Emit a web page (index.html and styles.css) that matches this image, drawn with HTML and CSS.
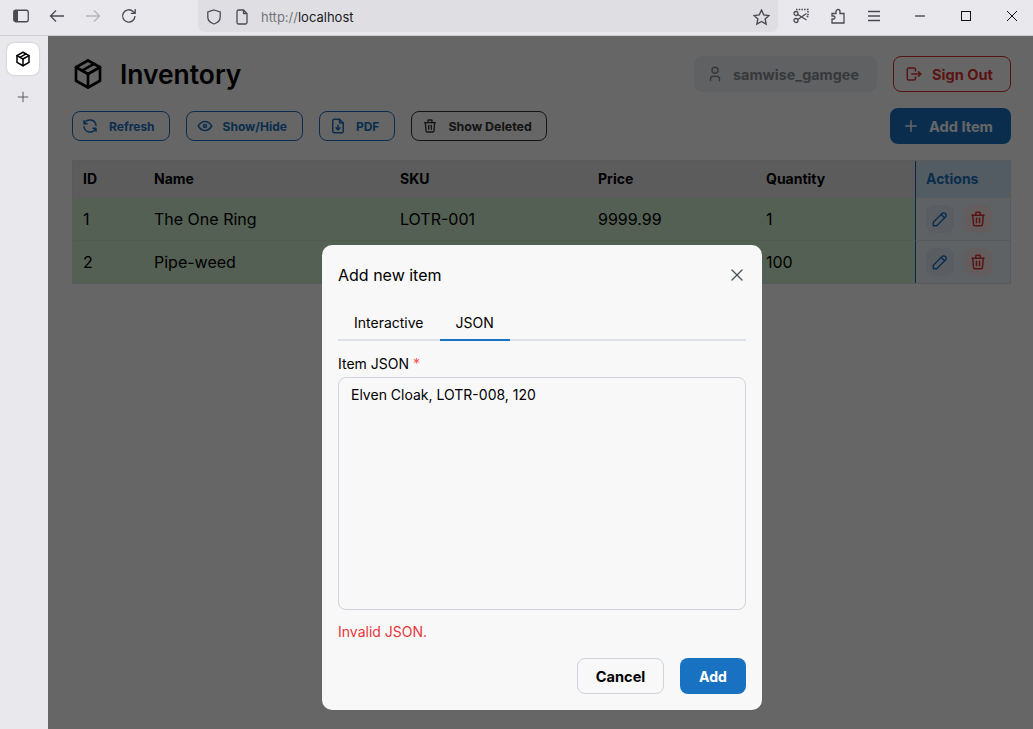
FILE: index.html
```html
<!DOCTYPE html>
<html>
	<head>
		<title>Inventory</title>
		<link rel="stylesheet" href="styles.css">
	</head>
	<body>
		<svg class="defs" width="0" height="0">
			<symbol id="i-package" viewBox="0 0 24 24"><path d="M12 3l8 4.5l0 9l-8 4.5l-8 -4.5l0 -9l8 -4.5"/><path d="M12 12l8 -4.5"/><path d="M12 12l0 9"/><path d="M12 12l-8 -4.5"/><path d="M16 5.25l-8 4.5"/></symbol>
			<symbol id="i-refresh" viewBox="0 0 24 24"><path d="M20 11a8.1 8.1 0 0 0 -15.5 -2m-.5 -4v4h4"/><path d="M4 13a8.1 8.1 0 0 0 15.5 2m.5 4v-4h-4"/></symbol>
			<symbol id="i-eye" viewBox="0 0 24 24"><path d="M10 12a2 2 0 1 0 4 0a2 2 0 0 0 -4 0"/><path d="M21 12c-2.4 4 -5.4 6 -9 6c-3.6 0 -6.6 -2 -9 -6c2.4 -4 5.4 -6 9 -6c3.6 0 6.6 2 9 6"/></symbol>
			<symbol id="i-file" viewBox="0 0 24 24"><path d="M14 3v4a1 1 0 0 0 1 1h4"/><path d="M17 21h-10a2 2 0 0 1 -2 -2v-14a2 2 0 0 1 2 -2h7l5 5v11a2 2 0 0 1 -2 2z"/><path d="M12 17v-6"/><path d="M9.5 14.5l2.5 2.5l2.5 -2.5"/></symbol>
			<symbol id="i-trash" viewBox="0 0 24 24"><path d="M4 7l16 0"/><path d="M10 11l0 6"/><path d="M14 11l0 6"/><path d="M5 7l1 12a2 2 0 0 0 2 2h8a2 2 0 0 0 2 -2l1 -12"/><path d="M9 7v-3a1 1 0 0 1 1 -1h4a1 1 0 0 1 1 1v3"/></symbol>
			<symbol id="i-user" viewBox="0 0 24 24"><path d="M8 7a4 4 0 1 0 8 0a4 4 0 0 0 -8 0"/><path d="M6 21v-2a4 4 0 0 1 4 -4h4a4 4 0 0 1 4 4v2"/></symbol>
			<symbol id="i-logout" viewBox="0 0 24 24"><path d="M14 8v-2a2 2 0 0 0 -2 -2h-7a2 2 0 0 0 -2 2v12a2 2 0 0 0 2 2h7a2 2 0 0 0 2 -2v-2"/><path d="M9 12h12l-3 -3"/><path d="M18 15l3 -3"/></symbol>
			<symbol id="i-plus" viewBox="0 0 24 24"><path d="M12 5l0 14"/><path d="M5 12l14 0"/></symbol>
			<symbol id="i-pencil" viewBox="0 0 24 24"><path d="M4 20h4l10.5 -10.5a2.828 2.828 0 1 0 -4 -4l-10.5 10.5v4"/><path d="M13.5 6.5l4 4"/></symbol>
			<symbol id="i-x" viewBox="0 0 24 24"><path d="M18 6l-12 12"/><path d="M6 6l12 12"/></symbol>
		</svg>

		<header class="chrome">
			<div class="nav">
				<svg class="ff" viewBox="0 0 16 16"><rect x="0.75" y="2.25" width="14.5" height="11.5" rx="2"/><path class="fill" d="M1 3h4v10h-4z"/></svg>
				<svg class="ff" viewBox="0 0 16 16"><path d="M15 8h-13.5M7 2.5l-5.500 5.500l5.500 5.500"/></svg>
				<svg class="ff off" viewBox="0 0 16 16"><path d="M1 8h13.500M9 2.500l5.500 5.500l-5.500 5.500"/></svg>
				<svg class="ff" viewBox="0 0 16 16"><path d="M14 8a6.200 6.200 0 1 1 -1.900 -4.500l1.900 1.700M14.200 1v4.400h-4.400"/></svg>
			</div>
			<div class="urlbar">
				<svg class="ff" viewBox="0 0 16 16"><path d="M8 1l6.200 2v5c0 3.500 -2.600 5.800 -6.200 7c-3.600 -1.200 -6.200 -3.500 -6.200 -7v-5z"/></svg>
				<svg class="ff" viewBox="0 0 16 16"><path d="M3 2.500a1.500 1.500 0 0 1 1.500 -1.500h5l3.500 3.500v9a1.500 1.500 0 0 1 -1.500 1.500h-7a1.500 1.500 0 0 1 -1.500 -1.500zM9.500 1v3.500h3.500"/></svg>
				<span class="url"><span class="scheme">http://</span>localhost</span>
				<svg class="ff star" viewBox="0 0 16 16"><path d="M8 1l2.100 4.500l4.900 .6l-3.600 3.300l1 4.800l-4.400 -2.500l-4.400 2.500l1 -4.800l-3.600 -3.300l4.900 -.6z"/></svg>
			</div>
			<div class="tools">
				<svg class="ff" viewBox="0 0 16 16"><path class="dash" d="M3 1.500h12v7h-2"/><circle cx="3" cy="5.500" r="2"/><circle cx="3" cy="12.500" r="2"/><path d="M4.800 6.500l8.700 5.500M4.800 11.500l8.700 -6"/></svg>
				<svg class="ff" viewBox="0 0 16 16"><path d="M2 15v-4h1.500a1.500 1.500 0 0 0 0 -3h-1.500v-2.500h4v-2a2 2 0 0 1 4 0v2h4v9.500z"/></svg>
				<svg class="ff" viewBox="0 0 16 16"><path d="M1 3.500h12M1 8h12M1 12.500h12"/></svg>
			</div>
			<div class="win">
				<svg viewBox="0 0 12 12"><path d="M1 6h10"/></svg>
				<svg viewBox="0 0 12 12"><rect x="1.500" y="1.500" width="9" height="9"/></svg>
				<svg viewBox="0 0 12 12"><path d="M1 1l10 10M11 1l-10 10"/></svg>
			</div>
		</header>

		<div class="below">
			<aside class="sidebar">
				<div class="side-tab"><svg class="icon"><use href="#i-package"/></svg></div>
				<svg class="side-plus" viewBox="0 0 16 16"><path d="M8 2v12M2 8h12"/></svg>
			</aside>

			<main class="page">
				<div class="top">
					<div class="brand">
						<svg class="icon brand-icon"><use href="#i-package"/></svg>
						<h1>Inventory</h1>
					</div>
					<div class="account">
						<div class="user-pill"><svg class="icon"><use href="#i-user"/></svg>samwise_gamgee</div>
						<button class="btn-signout"><svg class="icon"><use href="#i-logout"/></svg>Sign Out</button>
					</div>
				</div>

				<div class="toolbar">
					<div class="toolbar-left">
						<button class="btn-small first"><svg class="icon"><use href="#i-refresh"/></svg>Refresh</button>
						<button class="btn-small"><svg class="icon"><use href="#i-eye"/></svg>Show/Hide</button>
						<button class="btn-small"><svg class="icon"><use href="#i-file"/></svg>PDF</button>
						<button class="btn-small dark"><svg class="icon"><use href="#i-trash"/></svg>Show Deleted</button>
					</div>
					<button class="btn-add"><svg class="icon"><use href="#i-plus"/></svg>Add Item</button>
				</div>

				<table class="items">
					<colgroup>
						<col class="c-id"><col class="c-name"><col class="c-sku"><col class="c-price"><col class="c-qty"><col class="c-act">
					</colgroup>
					<thead>
						<tr><th>ID</th><th>Name</th><th>SKU</th><th>Price</th><th>Quantity</th><th class="act">Actions</th></tr>
					</thead>
					<tbody>
						<tr>
							<td>1</td><td>The One Ring</td><td>LOTR-001</td><td>9999.99</td><td>1</td>
							<td class="act"><div class="row-btns">
								<span class="btn-icon blue"><svg class="icon"><use href="#i-pencil"/></svg></span>
								<span class="btn-icon red"><svg class="icon"><use href="#i-trash"/></svg></span>
							</div></td>
						</tr>
						<tr>
							<td>2</td><td>Pipe-weed</td><td></td><td></td><td>100</td>
							<td class="act"><div class="row-btns">
								<span class="btn-icon blue"><svg class="icon"><use href="#i-pencil"/></svg></span>
								<span class="btn-icon red"><svg class="icon"><use href="#i-trash"/></svg></span>
							</div></td>
						</tr>
					</tbody>
				</table>

				<div class="overlay">
					<section class="modal">
						<div class="modal-head">
							<h2>Add new item</h2>
							<svg class="icon modal-close"><use href="#i-x"/></svg>
						</div>
						<div class="tabs">
							<span class="tab">Interactive</span>
							<span class="tab active">JSON</span>
						</div>
						<label class="field-label">Item JSON <span class="req">*</span></label>
						<div class="textarea">Elven Cloak, LOTR-008, 120</div>
						<p class="error">Invalid JSON.</p>
						<div class="modal-foot">
							<button class="btn-cancel">Cancel</button>
							<button class="btn-submit">Add</button>
						</div>
					</section>
				</div>
			</main>
		</div>
	</body>
</html>
```

FILE: styles.css
```css
/* chrome #e9e9ed, url bar #dfdfe3, mantine blue #1971c2 */
*{
	box-sizing: border-box;
}
html, body{
	margin: 0;
	height: 100%;
	overflow: hidden;
}
body{
	font-family: Inter, "Liberation Sans", sans-serif;
	background-color: #e9e9ed;
	color: #000;
}
button{
	font-family: inherit;
	cursor: pointer;
}
.defs{
	position: absolute;
}
.icon{
	width: 18px;
	height: 18px;
	fill: none;
	stroke: currentColor;
	stroke-width: 2;
	stroke-linecap: round;
	stroke-linejoin: round;
	flex: none;
}

/* browser bar */
.chrome{
	height: 36px;
	display: flex;
	border-bottom: 1px solid #cfcfd3;
	background-color: #e9e9ed;
}
.ff{
	width: 16px;
	height: 16px;
	fill: none;
	stroke: #4a4a52;
	stroke-width: 1.3;
	flex: none;
}
.ff .fill{
	fill: #4a4a52;
	stroke: none;
}
.ff.off{
	stroke: #b4b4b9;
}
.ff .dash{
	stroke-dasharray: 1.5 1.2;
	stroke-width: 1.5;
}
.nav{
	width: 198px;
	display: flex;
	align-items: center;
	gap: 20px;
	padding: 0 0 4px 13px;
}
.urlbar{
	width: 580px;
	height: 32px;
	background-color: #dfdfe3;
	border-radius: 0 0 6px 6px;
	display: flex;
	align-items: center;
	padding: 2px 8px 0 8px;
	gap: 12px;
}
.url{
	font-size: 13px;
	color: #1b1b1f;
	margin-left: -1px;
	flex: 1;
}
.scheme{
	color: #75757b;
}
.star{
	width: 17px;
	height: 17px;
}
.tools{
	display: flex;
	align-items: center;
	gap: 21px;
	padding: 0 0 4px 15px;
}
.win{
	display: flex;
	align-items: center;
	margin-left: auto;
	gap: 34px;
	padding: 0 15px 4px 0;
}
.win svg{
	width: 12px;
	height: 12px;
	fill: none;
	stroke: #111;
	stroke-width: 1;
}

/* sidebar */
.below{
	display: flex;
	height: 693px;
}
.sidebar{
	width: 48px;
	flex: none;
	display: flex;
	flex-direction: column;
	align-items: center;
	padding: 7px 2px 0 0;
}
.side-tab{
	width: 32px;
	height: 32px;
	background-color: #fff;
	border-radius: 7px;
	box-shadow: 0 0 2px rgba(0,0,0,.25);
	display: flex;
	align-items: center;
	justify-content: center;
}
.side-plus{
	width: 14px;
	height: 14px;
	margin-top: 15px;
	fill: none;
	stroke: #55555c;
	stroke-width: 1.1;
}

/* page */
.page{
	position: relative;
	flex: 1;
	min-width: 0;
	background-color: #fff;
	padding: 20px 22px 0 24px;
}
.top{
	display: flex;
	justify-content: space-between;
	align-items: center;
	height: 36px;
}
.brand{
	display: flex;
	align-items: center;
	gap: 14px;
}
.brand-icon{
	width: 36px;
	height: 36px;
	margin-left: -2px;
	stroke-width: 1.75;
}
h1{
	font-size: 26.4px;
	font-weight: 600;
	margin: 0;
}
.account{
	display: flex;
	gap: 16px;
}
.user-pill{
	width: 183px;
	height: 36px;
	border-radius: 8px;
	background-color: #f1f3f5;
	color: #868e96;
	font-size: 14.4px;
	font-weight: 700;
	display: flex;
	align-items: center;
	gap: 9px;
	padding-left: 12px;
}
.btn-signout{
	width: 118px;
	height: 36px;
	border: 1px solid #e03131;
	border-radius: 8px;
	background: none;
	color: #e03131;
	font-size: 14.6px;
	font-weight: 700;
	display: flex;
	align-items: center;
	gap: 9px;
	padding: 2px 0 0 11px;
}
.btn-signout .icon, .btn-add .icon{
	margin-top: -2px;
}
.toolbar{
	display: flex;
	justify-content: space-between;
	align-items: center;
	margin-top: 16px;
	height: 36px;
}
.toolbar-left{
	display: flex;
	gap: 16px;
}
.btn-small{
	height: 30px;
	border: 1px solid #1971c2;
	border-radius: 8px;
	background: none;
	color: #1971c2;
	font-size: 12px;
	font-weight: 700;
	display: flex;
	align-items: center;
	gap: 9px;
	padding: 0 15px 0 9px;
}
.btn-small.first{
	gap: 10px;
	padding: 0 14px 0 8px;
}
.btn-small.dark{
	border-color: #333;
	color: #333;
	font-size: 12.4px;
	gap: 10px;
	padding: 0 14px 0 10px;
}
.btn-small.dark .icon{
	width: 16px;
	height: 16px;
}
.btn-add{
	width: 121px;
	height: 36px;
	border: 0;
	border-radius: 8px;
	background-color: #1971c2;
	color: #fff;
	font-size: 14.6px;
	font-weight: 700;
	display: flex;
	align-items: center;
	gap: 9px;
	padding: 2px 0 0 12px;
}

/* table */
.items{
	width: 939px;
	margin-top: 16px;
	border-collapse: separate;
	border-spacing: 0;
	table-layout: fixed;
	font-size: 16px;
	border: 1px solid #dee2e6;
}
.c-id{ width: 71px; }
.c-name{ width: 246px; }
.c-sku{ width: 198px; }
.c-price{ width: 168px; }
.c-qty{ width: 159px; }
.c-act{ width: 95px; }
.items th, .items td{
	text-align: left;
	padding: 0 0 0 10px;
}
.items th{
	height: 37px;
	padding-bottom: 2px;
	font-size: 14px;
	font-weight: 700;
	background-color: #e6e6e9;
}
.items td{
	height: 43px;
	background-color: #d0efd0;
	border-bottom: 1px solid #c9e6c9;
}
.items tr:last-child td{
	height: 42px;
	border-bottom: 0;
}
.items .act{
	border-left: 1px solid #1864ab;
}
.items th.act{
	color: #1971c2;
	background-color: #d0e6f7;
}
.items td.act{
	background-color: #eef5fb;
	border-bottom-color: #dee2e6;
}
.row-btns{
	display: flex;
	gap: 10px;
}
.btn-icon{
	width: 28px;
	height: 28px;
	border-radius: 8px;
	display: flex;
	align-items: center;
	justify-content: center;
}
.btn-icon.blue{
	color: #1971c2;
	background-color: #e1ecf6;
}
.btn-icon.blue .icon{
	width: 20px;
	height: 20px;
	stroke-width: 1.75;
}
.btn-icon.red{
	color: #e03131;
	background-color: #fae8e8;
}

/* modal */
.overlay{
	position: absolute;
	inset: 0;
	background-color: rgba(0,0,0,.6);
	display: flex;
	justify-content: center;
	align-items: flex-end;
	padding: 0 0 19px 3px;
}
.modal{
	width: 440px;
	height: 465px;
	background-color: #f8f8f8;
	border-radius: 10px;
	padding: 16px;
	display: flex;
	flex-direction: column;
}
.modal-head{
	display: flex;
	justify-content: space-between;
	align-items: center;
	height: 28px;
}
h2{
	font-size: 16px;
	font-weight: 400;
	margin: 0;
}
.modal-close{
	width: 20px;
	height: 20px;
	margin-right: -1px;
	stroke-width: 1.5;
	color: #495057;
}
.tabs{
	display: flex;
	margin-top: 17px;
	border-bottom: 2px solid #dee2e6;
	height: 35px;
}
.tab{
	font-size: 14px;
	height: 35px;
	padding: 0 16px;
	display: flex;
	align-items: center;
	border-bottom: 2px solid transparent;
}
.tab.active{
	border-bottom-color: #1971c2;
}
.field-label{
	font-size: 14px;
	line-height: 20px;
	margin-top: 13px;
}
.req{
	color: #fa5252;
}
.textarea{
	height: 233px;
	margin-top: 3px;
	border: 1px solid #ced4da;
	border-radius: 8px;
	font-size: 14px;
	line-height: 20px;
	padding: 7px 12px;
}
.error{
	font-size: 14px;
	line-height: 20px;
	color: #e8363a;
	margin: 12px 0 0 0;
}
.modal-foot{
	display: flex;
	justify-content: flex-end;
	gap: 16px;
	margin-top: 16px;
}
.btn-cancel, .btn-submit{
	height: 36px;
	border-radius: 8px;
	font-size: 14px;
	font-weight: 700;
	padding: 0;
}
.btn-cancel{
	width: 87px;
	border: 1px solid #ced4da;
	background: none;
	color: #000;
	font-size: 14.6px;
	padding-top: 2px;
}
.btn-submit{
	width: 66px;
	border: 0;
	background-color: #1971c2;
	color: #fff;
}
```
